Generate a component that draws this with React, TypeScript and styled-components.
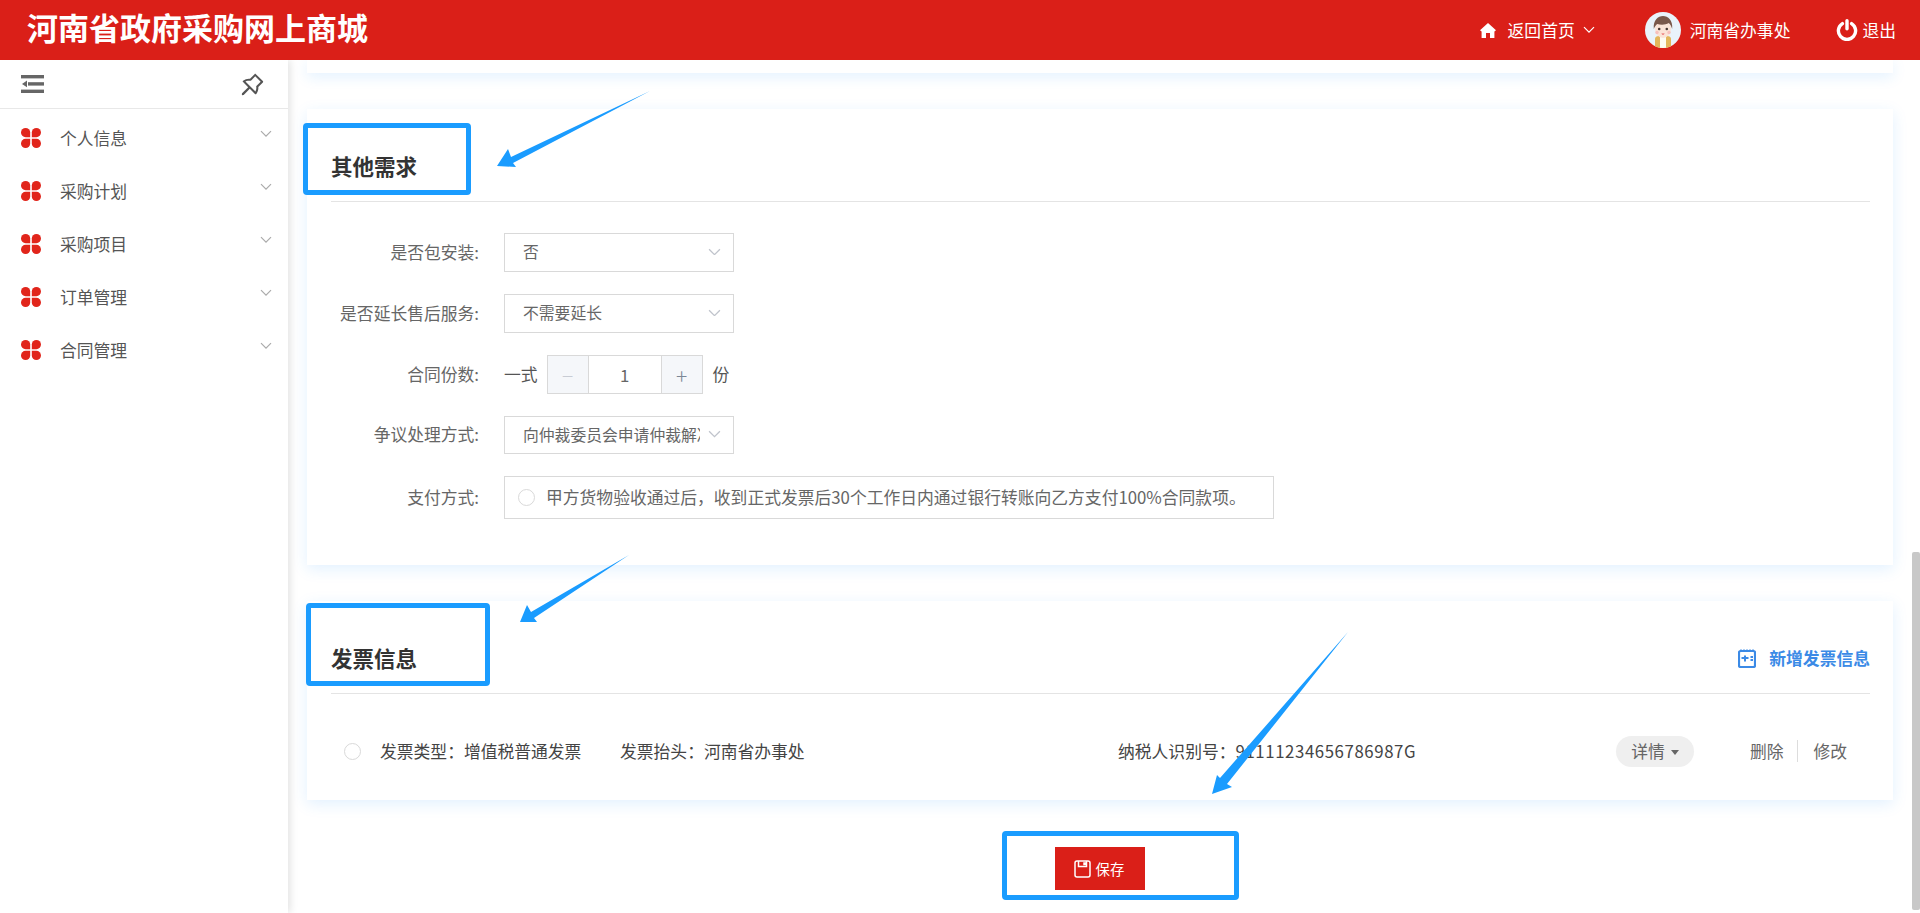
import React, {FC} from 'react';
import styled, {createGlobalStyle} from 'styled-components';
import {AiOutlinePushpin} from 'react-icons/ai';

const FONT = '"Noto Sans CJK SC", "Noto Sans", sans-serif';

const GlobalStyle = createGlobalStyle`
  html, body {
    margin: 0;
    padding: 0;
    height: 100%;
    overflow: hidden;
    background: #fff;
    font-family: ${FONT};
  }
  * {
    box-sizing: border-box;
  }
`

const Page = styled.div`
  position: relative;
  width: 1920px;
  height: 913px;
  overflow: hidden;
  display: flex;
  flex-direction: column;
`

/* header */
const Header = styled.header`
  flex: none;
  height: 60px;
  background: #da1f18;
  color: #fff;
  display: flex;
  align-items: center;
  padding: 0 24px 0 27px;
  position: relative;
  z-index: 3;
`

const Logo = styled.h1`
  margin: 0;
  font-size: 31px;
  line-height: 60px;
  font-weight: 700;
  letter-spacing: 0;
  font-family: "Liberation Serif", ${FONT};
`

const HeaderRight = styled.div`
  margin-left: auto;
  display: flex;
  align-items: center;
  font-size: 16.8px;
`

const HomeLink = styled.div`
  display: flex;
  align-items: center;
  margin-right: 50px;

  span {
    margin: 0 8px 0 12px;
  }
`

const UserBox = styled.div`
  display: flex;
  align-items: center;
  margin-right: 46px;

  span {
    margin-left: 9px;
  }
`

const Logout = styled.div`
  display: flex;
  align-items: center;

  span {
    margin-left: 4px;
  }
`

/* sidebar */
const Body = styled.div`
  flex: 1;
  display: flex;
  min-height: 0;
`

const Sidebar = styled.aside`
  flex: none;
  width: 288px;
  background: #fff;
  box-shadow: 2px 0 8px rgba(0, 0, 0, .12);
  position: relative;
  z-index: 2;
`

const SideTop = styled.div`
  height: 49px;
  border-bottom: 1px solid #e8e8e8;
  display: flex;
  align-items: center;
  justify-content: space-between;
  padding: 0 21px 0 21px;
  color: #555;
`

const Menu = styled.ul`
  list-style: none;
  margin: 0;
  padding: 2px 16px 0 21px;
`

const MenuItem = styled.li`
  height: 53px;
  display: flex;
  align-items: center;
  font-size: 16.8px;
  color: #555;

  span {
    margin-left: 19px;
    flex: 1;
  }

  svg:last-child {
    margin-bottom: 7px;
  }
`

const Chevron = styled.svg<{$size?: number}>`
  flex: none;
  width: ${({$size}) => $size || 12}px;
  height: ${({$size}) => ($size || 12) * 0.6}px;
  fill: none;
  stroke: currentColor;
  stroke-width: 1.2;
`

const MenuChevron = styled(Chevron)`
  color: #aaa;
`

/* content */
const Main = styled.main`
  flex: 1;
  min-width: 0;
  padding: 0 19px;
  overflow: hidden;
`

const Card = styled.section`
  background: #fff;
  padding: 0 23px 0 24px;
  margin-bottom: 36px;
  box-shadow: 0 4px 14px rgba(30, 144, 255, .13);
`

const TopStub = styled(Card)`
  height: 13px;
`

const CardHeader = styled.div`
  height: 93px;
  border-bottom: 1px solid #e4e4e4;
  display: flex;
  align-items: flex-end;
  justify-content: space-between;
  padding-bottom: 20px;
`

const CardTitle = styled.h2`
  margin: 0;
  font-size: 21.5px;
  line-height: 30px;
  font-weight: 700;
  color: #333;
`

const AddInvoice = styled.a`
  display: flex;
  align-items: center;
  gap: 13px;
  font-size: 16.8px;
  line-height: 30px;
  font-weight: 700;
  color: #3b8ae6;
`

const Form = styled.div`
  padding: 31px 0 46px;
  display: flex;
  flex-direction: column;
  gap: 22px;
`

const FormRow = styled.div`
  display: flex;
  align-items: center;
  font-size: 16.8px;
  color: #666;
`

const Label = styled.label`
  flex: none;
  width: 148px;
  text-align: right;
  margin-right: 25px;
  padding-bottom: 2px;
  color: #666;
`

const Select = styled.div<{$short?: boolean}>`
  width: 230px;
  height: ${({$short}) => ($short ? 38 : 39)}px;
  border: 1px solid #d9d9d9;
  display: flex;
  align-items: center;
  padding: 0 12px 2px 18px;
  color: #666;
  font-size: 15.8px;

  span {
    flex: 1;
    min-width: 0;
    overflow: hidden;
    white-space: nowrap;
    margin-right: ${({$short}) => ($short ? 8 : 0)}px;
  }
`

const SelectChevron = styled(Chevron)`
  color: #c0c4cc;
`

const Counter = styled.div`
  width: 156px;
  height: 39px;
  margin: 0 10px 0 9px;
  border: 1px solid #d9d9d9;
  display: flex;
  align-items: stretch;
`

const CounterBtn = styled.div<{$muted?: boolean}>`
  flex: none;
  width: 40px;
  background: #f5f7fa;
  display: flex;
  align-items: center;
  justify-content: center;
  font-size: 21px;
  font-weight: 300;
  color: ${({$muted}) => ($muted ? '#c8ccd4' : '#7c8796')};
`

const CounterValue = styled.div`
  flex: 1;
  border-left: 1px solid #d9d9d9;
  border-right: 1px solid #d9d9d9;
  display: flex;
  align-items: center;
  justify-content: center;
  font-size: 16.8px;
  color: #666;
`

const CounterText = styled.span`
  color: #555;
  padding-bottom: 2px;
`

const PayBox = styled.div`
  width: 770px;
  height: 43px;
  border: 1px solid #d9d9d9;
  display: flex;
  align-items: center;
  padding-left: 13px;
  color: #666;
`

const Radio = styled.i`
  flex: none;
  display: block;
  width: 17px;
  height: 17px;
  border: 1px solid #d9d9d9;
  border-radius: 50%;
  background: #fff;
`

const PayText = styled.span`
  margin-left: 11px;
  padding-bottom: 2px;
  white-space: nowrap;
`

const InvoiceRow = styled.div`
  height: 106px;
  display: flex;
  align-items: center;
  padding-left: 13px;
  padding-top: 8px;
  font-size: 16.8px;
  color: #444;
`

const InvoiceRadio = styled(Radio)`
  margin-right: 19px;
`

const InvoiceCell = styled.div<{$w: number}>`
  flex: none;
  width: ${({$w}) => $w}px;
  white-space: nowrap;
`

const TaxNo = styled.span`
  letter-spacing: .6px;
`

const DetailPill = styled.div`
  flex: none;
  width: 78px;
  height: 31px;
  border-radius: 16px;
  background: #efefef;
  display: flex;
  align-items: center;
  justify-content: center;
  gap: 6px;
  color: #666;
  margin-right: 56px;

  i {
    display: block;
    border-top: 5px solid #666;
    border-left: 4px solid transparent;
    border-right: 4px solid transparent;
    margin-top: 2px;
  }
`

const RowAction = styled.a`
  color: #666;
  line-height: 24px;
`

const ActionSep = styled.i`
  display: block;
  width: 1px;
  height: 22px;
  background: #ddd;
  margin: 0 16px 0 13px;
`

const Footer = styled.div`
  display: flex;
  justify-content: center;
  margin-top: 47px;
`

const SaveButton = styled.button`
  width: 90px;
  height: 43px;
  border: 0;
  background: #da1f18;
  color: #fff;
  font-family: ${FONT};
  font-size: 14.4px;
  display: flex;
  align-items: center;
  justify-content: center;
  gap: 5px;
  padding: 0 2px 0 0;
`

const ScrollTrack = styled.div`
  flex: none;
  width: 8px;
  padding: 492px 0 3px;
  background: #fff;
`

const ScrollThumb = styled.div`
  height: 100%;
  background: #c8c8c8;
  border-radius: 2px;
`

/* annotations drawn over the screenshot */
const Mark = styled.div<{$x: number; $y: number; $w: number; $h: number}>`
  position: absolute;
  left: ${({$x}) => $x}px;
  top: ${({$y}) => $y}px;
  width: ${({$w}) => $w}px;
  height: ${({$h}) => $h}px;
  border: 5px solid #1a9cff;
  border-radius: 4px;
  pointer-events: none;
  z-index: 5;
`

const ArrowLayer = styled.svg`
  position: absolute;
  left: 0;
  top: 0;
  width: 1920px;
  height: 913px;
  pointer-events: none;
  z-index: 5;

  polygon {
    fill: #1a9cff;
  }
`

const DownIcon = () => (
    <polyline points="1,1 6,6 11,1" />
);

const menuList = ['个人信息', '采购计划', '采购项目', '订单管理', '合同管理'];

const Flower = () => (
    <svg width="20" height="20" viewBox="0 0 20 20" fill="#e1251b" style={{flex: 'none'}}>
        <path d="M9.2 9.2V4.6a4.6 4.6 0 1 0-4.6 4.6z" />
        <path d="M10.8 9.2V4.6a4.6 4.6 0 1 1 4.6 4.6z" />
        <path d="M9.2 10.8v4.6a4.6 4.6 0 1 1-4.6-4.6z" />
        <path d="M10.8 10.8v4.6a4.6 4.6 0 1 0 4.6-4.6z" />
    </svg>
);

const CollapseIcon = () => (
    <svg width="23" height="18" viewBox="0 0 23 18" fill="#666">
        <rect x="0" y="0" width="23" height="3.4" />
        <rect x="7" y="7.2" width="16" height="3.4" />
        <rect x="0" y="14.6" width="23" height="3.4" />
        <polygon points="1,8.9 6,5.6 6,12.2" />
    </svg>
);

const HomeIcon = () => (
    <svg width="16" height="15" viewBox="0 0 16 15" fill="#fff">
        <path d="M8 0 16 7.2 14.4 8.4V15H10V10H6V15H1.6V8.4L0 7.2z" />
    </svg>
);

const PowerIcon = () => (
    <svg width="22" height="22" viewBox="0 0 22 22" fill="none" stroke="#fff" strokeWidth="3.4" strokeLinecap="round">
        <path d="M6.4 4.6a8.6 8.6 0 1 0 9.2 0" />
        <path d="M11 1.8v8" />
    </svg>
);

const Avatar = () => (
    <svg width="36" height="36" viewBox="0 0 36 36" style={{flex: 'none'}}>
        <defs>
            <clipPath id="avatarClip">
                <circle cx="18" cy="18" r="18" />
            </clipPath>
        </defs>
        <g clipPath="url(#avatarClip)">
            <rect width="36" height="36" fill="#e9f3fb" />
            <path d="M10 36V27q0-3 4-3h8q4 0 4 3v9z" fill="#e3b65b" />
            <rect x="15" y="24" width="6" height="12" fill="#fdfbf2" />
            <ellipse cx="18" cy="17" rx="8" ry="9" fill="#fbe3d6" />
            <path d="M8.8 17C8 8 13 4 18 4s10 4 9.200 13c-1-3-2-5-3.500-6-3 2-8 2-11.500 1-1.500 1-2.600 3-3.400 5z" fill="#79584a" />
            <circle cx="14.200" cy="17" r="1.300" fill="#4a3a35" />
            <circle cx="21.800" cy="17" r="1.300" fill="#4a3a35" />
            <circle cx="12" cy="20.500" r="1.700" fill="#f7c0bd" />
            <circle cx="24" cy="20.500" r="1.700" fill="#f7c0bd" />
            <path d="M16.300 21.500h3.400q-1.700 2.400-3.400 0z" fill="#e8585a" />
        </g>
    </svg>
);

const InvoiceIcon = () => (
    <svg width="18" height="19" viewBox="0 0 18 19" fill="none" stroke="#3b8ae6">
        <rect x="1" y="2" width="16" height="16" rx="1.500" strokeWidth="2.200" />
        <path d="M3 .5v2.500M6 .5v2.500M9 .5v2.500M12 .5v2.500M15 .5v2.500" strokeWidth="1.600" />
        <path d="M3.500 9h7M7 6.500v6M12.500 8h2.500M12.500 11h2.500" strokeWidth="2" />
    </svg>
);

const SaveIcon = () => (
    <svg width="17" height="18" viewBox="0 0 17 18" fill="none" stroke="#fff" strokeWidth="1.500">
        <rect x="1" y="1" width="15" height="16" rx="2" />
        <path d="M4.500 1v5.500h8V1" />
        <path d="M10 3h1.500v1.500H10z" fill="#fff" />
    </svg>
);

const App: FC = () => {
    return (
        <Page>
            <GlobalStyle />
            <Header>
                <Logo>河南省政府采购网上商城</Logo>
                <HeaderRight>
                    <HomeLink>
                        <HomeIcon />
                        <span>返回首页</span>
                        <Chevron viewBox="0 0 12 7"><DownIcon /></Chevron>
                    </HomeLink>
                    <UserBox>
                        <Avatar />
                        <span>河南省办事处</span>
                    </UserBox>
                    <Logout>
                        <PowerIcon />
                        <span>退出</span>
                    </Logout>
                </HeaderRight>
            </Header>
            <Body>
                <Sidebar>
                    <SideTop>
                        <CollapseIcon />
                        <AiOutlinePushpin size={29} />
                    </SideTop>
                    <Menu>
                        {menuList.map(item => (
                            <MenuItem key={item}>
                                <Flower />
                                <span>{item}</span>
                                <MenuChevron viewBox="0 0 12 7"><DownIcon /></MenuChevron>
                            </MenuItem>
                        ))}
                    </Menu>
                </Sidebar>
                <Main>
                    <TopStub />
                    <Card>
                        <CardHeader>
                            <CardTitle>其他需求</CardTitle>
                        </CardHeader>
                        <Form>
                            <FormRow>
                                <Label>是否包安装:</Label>
                                <Select>
                                    <span>否</span>
                                    <SelectChevron $size={13} viewBox="0 0 12 7"><DownIcon /></SelectChevron>
                                </Select>
                            </FormRow>
                            <FormRow>
                                <Label>是否延长售后服务:</Label>
                                <Select>
                                    <span>不需要延长</span>
                                    <SelectChevron $size={13} viewBox="0 0 12 7"><DownIcon /></SelectChevron>
                                </Select>
                            </FormRow>
                            <FormRow>
                                <Label>合同份数:</Label>
                                <CounterText>一式</CounterText>
                                <Counter>
                                    <CounterBtn $muted>−</CounterBtn>
                                    <CounterValue>1</CounterValue>
                                    <CounterBtn>+</CounterBtn>
                                </Counter>
                                <CounterText>份</CounterText>
                            </FormRow>
                            <FormRow>
                                <Label>争议处理方式:</Label>
                                <Select $short>
                                    <span>向仲裁委员会申请仲裁解决</span>
                                    <SelectChevron $size={13} viewBox="0 0 12 7"><DownIcon /></SelectChevron>
                                </Select>
                            </FormRow>
                            <FormRow>
                                <Label>支付方式:</Label>
                                <PayBox>
                                    <Radio />
                                    <PayText>甲方货物验收通过后，收到正式发票后30个工作日内通过银行转账向乙方支付100%合同款项。</PayText>
                                </PayBox>
                            </FormRow>
                        </Form>
                    </Card>
                    <Card>
                        <CardHeader>
                            <CardTitle>发票信息</CardTitle>
                            <AddInvoice>
                                <InvoiceIcon />
                                新增发票信息
                            </AddInvoice>
                        </CardHeader>
                        <InvoiceRow>
                            <InvoiceRadio />
                            <InvoiceCell $w={240}>发票类型：增值税普通发票</InvoiceCell>
                            <InvoiceCell $w={498}>发票抬头：河南省办事处</InvoiceCell>
                            <InvoiceCell $w={498}>纳税人识别号：<TaxNo>91111234656786987G</TaxNo></InvoiceCell>
                            <DetailPill>详情<i /></DetailPill>
                            <RowAction>删除</RowAction>
                            <ActionSep />
                            <RowAction>修改</RowAction>
                        </InvoiceRow>
                    </Card>
                    <Footer>
                        <SaveButton>
                            <SaveIcon />
                            保存
                        </SaveButton>
                    </Footer>
                </Main>
                <ScrollTrack>
                    <ScrollThumb />
                </ScrollTrack>
            </Body>

            <Mark $x={303} $y={123} $w={168} $h={72} />
            <Mark $x={306} $y={603} $w={184} $h={83} />
            <Mark $x={1002} $y={831} $w={237} $h={69} />
            <ArrowLayer viewBox="0 0 1920 913">
                <polygon points="650,91 511,157 508,149 497,166 516,167 513,163" />
                <polygon points="629,555 531,612 527,605 520,622 537,622 534,618" />
                <polygon points="1348,632 1220,778 1217,775 1212,794 1232,787 1227,784" />
            </ArrowLayer>
        </Page>
    );
};

export default App;
